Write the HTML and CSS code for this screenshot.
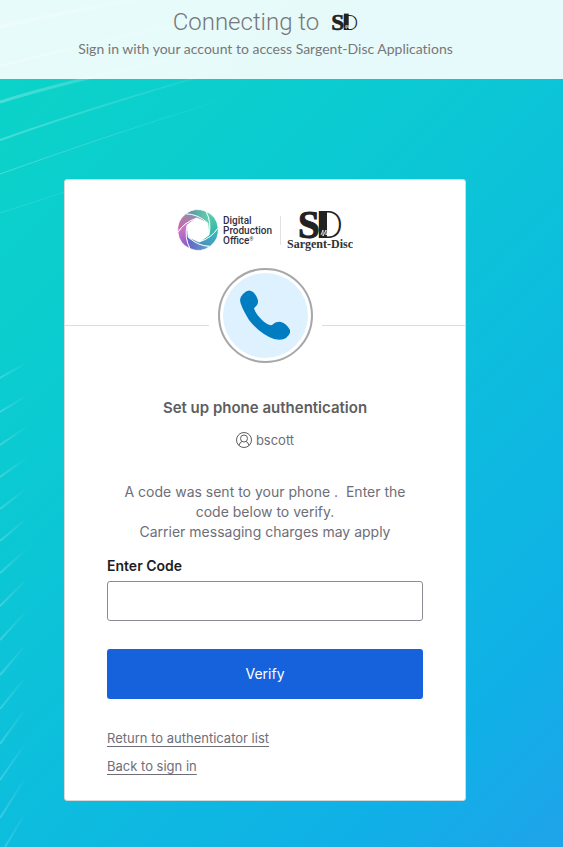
FILE: index.html
```html
<!DOCTYPE html>
<html lang="en">
<head>
    <meta charset="UTF-8">
    <meta name="viewport" content="width=device-width, initial-scale=1">
    <title>Sargent-Disc - Sign In</title>
    <link rel="stylesheet" href="styles.css">
</head>
<body>
    <svg class="bg-lines" width="300" height="847" viewBox="0 0 300 847" aria-hidden="true">
        <defs>
            <linearGradient id="fade" gradientUnits="userSpaceOnUse" x1="0" y1="0" x2="250" y2="0">
                <stop offset="0" stop-color="#fff" stop-opacity=".25"/>
                <stop offset="1" stop-color="#fff" stop-opacity="0"/>
            </linearGradient>
            <linearGradient id="fade-short" gradientUnits="userSpaceOnUse" x1="0" y1="0" x2="28" y2="0">
                <stop offset="0" stop-color="#fff" stop-opacity=".2"/>
                <stop offset="1" stop-color="#fff" stop-opacity="0"/>
            </linearGradient>
        </defs>
        <g fill="none" stroke="url(#fade)">
            <path stroke-width="4" d="M0 27Q80 8 160-4"/>
            <path stroke-width="3" d="M0 66Q90 43 190 22"/>
            <path stroke-width="3" d="M0 102Q80 77 250 42"/>
            <path stroke-width="2" d="M0 140Q120 98 260 60"/>
            <path d="M0 174Q100 138 215 102"/>
            <path opacity=".5" d="M0 213L65 192"/>
        </g>
        <path fill="none" stroke="url(#fade-short)" stroke-width="2" d="M0 378l28-16M0 412l28-17M0 445l28-19M0 477l28-20M0 509l26-20M0 541l26-22M0 573l28-25M0 606l24-24M0 640l24-26M0 675l24-28M0 709l24-30M0 744l24-33M0 780l25-36M0 818l24-38M5 847l18-30"/>
    </svg>

    <header class="banner">
        <h1>
            Connecting to
            <svg class="mini-logo" width="27" height="18" viewBox="0 0 44 30" role="img" aria-label="SD">
                <use href="#sd"/>
            </svg>
        </h1>
        <p>Sign in with your account to access Sargent-Disc Applications</p>
    </header>

    <main class="container">
        <div class="card">
            <div class="card-header">
                <svg class="logo" width="176" height="42" viewBox="0 0 176 42" role="img" aria-label="Digital Production Office, Sargent-Disc">
                    <defs>
                        <linearGradient id="g1"><stop stop-color="#6a5cc6"/><stop offset="1" stop-color="#5ba7c9"/></linearGradient>
                        <linearGradient id="g2"><stop stop-color="#d878c0"/><stop offset="1" stop-color="#7556cf"/></linearGradient>
                        <linearGradient id="g3"><stop stop-color="#8a93ae"/><stop offset="1" stop-color="#e058ae"/></linearGradient>
                        <linearGradient id="g4"><stop stop-color="#62d6aa"/><stop offset="1" stop-color="#5a86a8"/></linearGradient>
                        <linearGradient id="g5"><stop stop-color="#35b3a7"/><stop offset="1" stop-color="#62d3ac"/></linearGradient>
                        <linearGradient id="g6"><stop stop-color="#4c8fbf"/><stop offset="1" stop-color="#2fc3be"/></linearGradient>
                        <path id="blade" d="M-11-5Q-14 8-8 18.700A20.400 20.400 0 0 0 12.200 16.300Q0 16-9.800 7Z"/>
                        <g id="sd" fill="#222">
                            <text x="0" y="28" font-family="Liberation Serif, serif" font-weight="700" font-size="39" stroke="#222">S</text>
                            <text x="17" y="28" font-family="Lato, sans-serif" font-weight="300" font-size="37">D</text>
                            <rect x="21" y="1" width="8" height="27"/>
                            <path fill="none" stroke="#fff" stroke-width=".8" d="M23 25l2-5v6l3-6v5l2-3v4"/>
                        </g>
                    </defs>
                    <!-- shutter -->
                    <g transform="translate(21 21)" stroke="#fff" stroke-width=".8">
                        <use href="#blade" fill="url(#g1)"/>
                        <use href="#blade" fill="url(#g2)" transform="rotate(60)"/>
                        <use href="#blade" fill="url(#g3)" transform="rotate(120)"/>
                        <use href="#blade" fill="url(#g4)" transform="rotate(180)"/>
                        <use href="#blade" fill="url(#g5)" transform="rotate(240)"/>
                        <use href="#blade" fill="url(#g6)" transform="rotate(300)"/>
                    </g>
                    <g class="dpo-text">
                        <text x="46" y="15">Digital</text>
                        <text x="46" y="25">Production</text>
                        <text x="46" y="35">Office<tspan font-size="5" dy="-3">®</tspan></text>
                    </g>
                    <path stroke="#e2e2e2" d="M103.500 7v29"/>
                    <use href="#sd" x="121" y="1"/>
                    <text class="sd-text" x="110" y="39">Sargent-Disc</text>
                </svg>
            </div>
            <div class="beacon-row">
                <div class="beacon">
                    <svg width="50" height="51" viewBox="0 0 50 51" aria-hidden="true">
                        <path fill="#007cc0" d="M3 4Q8-2 13 2Q18 7 18 12Q18 15 14 18Q15 23 22 30Q28 36 32 35Q36 31 41 32Q46 33 50 40Q51 44 46 48Q42 51 34 49Q20 44 9 30Q0 15 0 10Q0 7 3 4Z"/>
                    </svg>
                </div>
            </div>
            <div class="content">
                <h2>Set up phone authentication</h2>
                <div class="user">
                    <svg width="16" height="16" viewBox="0 0 16 16" fill="none" stroke="#5e5e5e" aria-hidden="true">
                        <circle cx="8" cy="8" r="7.500"/>
                        <circle cx="8" cy="6.500" r="3.500"/>
                        <path d="M3 13.500Q3.500 10.500 6 9.500M13 13.500Q12.500 10.500 10 9.500"/>
                    </svg>
                    <span>bscott</span>
                </div>
                <form>
                    <p class="info">A code was sent to your phone .&nbsp; Enter the code below to verify.<br>Carrier messaging charges may apply</p>
                    <label for="code">Enter Code</label>
                    <input type="text" id="code" name="code" autocomplete="off">
                    <button type="submit">Verify</button>
                </form>
                <div class="links">
                    <a href="#">Return to authenticator list</a>
                    <a href="#">Back to sign in</a>
                </div>
            </div>
        </div>
    </main>
</body>
</html>
```

FILE: styles.css
```css
* {
    box-sizing: border-box;
}
body {
    position: relative;
    margin: 0;
    min-height: 100vh;
    font-family: Inter, Arial, sans-serif;
    font-size: 14px;
    line-height: 20px;
    color: #6e6e78;
    background: linear-gradient(135deg, #0bd5c6 0%, #0bcbd1 32%, #0dbddd 60%, #10b0e7 85%, #20a3ea 100%);
}
.bg-lines {
    position: absolute;
    top: 0;
    left: 0;
    z-index: -1;
}
.banner {
    height: 79px;
    padding: 8px 32px 0 0;
    background: rgba(255, 255, 255, 0.9);
    color: #777;
    font-family: Roboto, sans-serif;
    text-align: center;
}
.banner h1 {
    display: flex;
    justify-content: center;
    align-items: center;
    gap: 12px;
    margin: 0;
    font-size: 24px;
    font-weight: 300;
    line-height: 28px;
}
.banner p {
    margin: 3px 0 0;
    font-family: Lato, sans-serif;
    font-variant-ligatures: none;
}
.container {
    padding: 100px 33px 46px 0;
}
.card {
    width: 402px;
    max-width: 100%;
    margin: 0 auto;
    background: #fff;
    border: 1px solid #d8d8d8;
    border-radius: 3px;
}
.card-header {
    height: 88px;
    padding-top: 29px;
    text-align: center;
}
.logo {
    max-width: 100%;
}
.dpo-text {
    font-family: Roboto, sans-serif;
    font-size: 10px;
    font-weight: 500;
    fill: #30303f;
}
.sd-text {
    font-family: "Liberation Serif", serif;
    font-size: 12px;
    font-weight: 700;
    fill: #333;
}
.beacon-row {
    display: flex;
    align-items: center;
    gap: 9px;
}
.beacon-row::before,
.beacon-row::after {
    content: "";
    flex: 1;
    height: 1px;
    margin-top: 20px;
    background: #ddd;
}
.beacon {
    display: flex;
    justify-content: center;
    align-items: center;
    width: 95px;
    height: 95px;
    border: 2px solid #a7a7a7;
    border-radius: 50%;
    background: #def1ff;
    box-shadow: inset 0 0 0 3px #fff;
}
.content {
    padding: 33px 42px 24px;
}
h2 {
    margin: 0;
    font-size: 15px;
    font-weight: 600;
    line-height: 24px;
    color: #5e5e5e;
    text-align: center;
}
.user {
    display: flex;
    justify-content: center;
    align-items: center;
    gap: 4px;
    margin-top: 10px;
    font-size: 13px;
}
.info {
    margin: 32px 0 14px;
    padding: 0 12px;
    text-align: center;
}
label {
    display: block;
    font-weight: 600;
    color: #1d1d21;
}
input {
    display: block;
    width: 100%;
    height: 40px;
    margin-top: 5px;
    padding: 0 12px;
    border: 1px solid #8c8c96;
    border-radius: 3px;
    font: inherit;
}
button {
    display: block;
    width: 100%;
    height: 50px;
    margin-top: 28px;
    border: 0;
    border-radius: 3px;
    background: #1662dd;
    color: #fff;
    font: inherit;
    cursor: pointer;
}
.links {
    display: flex;
    flex-direction: column;
    align-items: flex-start;
    gap: 8px;
    margin-top: 29px;
    font-size: 13px;
}
.links a {
    color: #6e6e78;
    text-underline-offset: 3px;
}
```
